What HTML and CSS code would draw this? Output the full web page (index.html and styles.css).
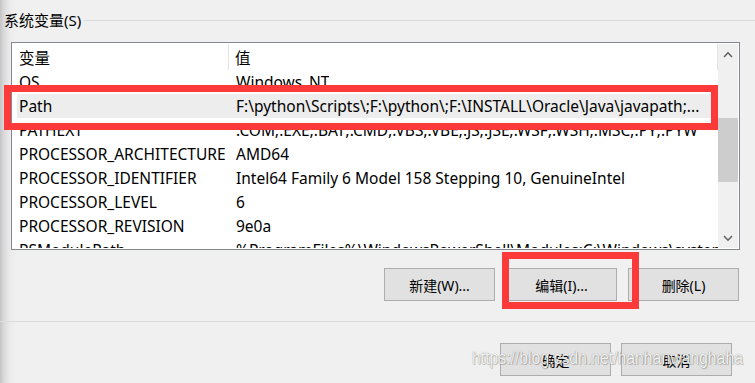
FILE: index.html
```html
<!DOCTYPE html>
<html lang="zh-CN">
<head>
  <meta charset="UTF-8">
  <meta name="viewport" content="width=device-width, initial-scale=1.0">
  <title>环境变量</title>
  <link rel="stylesheet" href="styles.css">
</head>
<body>
  <div class="dialog">
    <!-- 系统变量 -->
    <div class="group">
      <div class="group-title">
        <span>系统变量(S)</span>
        <i class="group-line"></i>
      </div>

      <div class="list">
        <div class="list-main">
          <div class="list-head">
            <div class="col-name">变量</div>
            <div class="col-value">值</div>
          </div>
          <div class="list-body">
            <div class="row first">
              <div class="cell-name">OS</div>
              <div class="cell-value">Windows_NT</div>
            </div>
            <div class="row selected">
              <div class="cell-name">Path</div>
              <div class="cell-value">F:\python\Scripts\;F:\python\;F:\INSTALL\Oracle\Java\javapath;...</div>
            </div>
            <div class="row">
              <div class="cell-name">PATHEXT</div>
              <div class="cell-value">.COM;.EXE;.BAT;.CMD;.VBS;.VBE;.JS;.JSE;.WSF;.WSH;.MSC;.PY;.PYW</div>
            </div>
            <div class="row">
              <div class="cell-name">PROCESSOR_ARCHITECTURE</div>
              <div class="cell-value">AMD64</div>
            </div>
            <div class="row">
              <div class="cell-name">PROCESSOR_IDENTIFIER</div>
              <div class="cell-value">Intel64 Family 6 Model 158 Stepping 10, GenuineIntel</div>
            </div>
            <div class="row">
              <div class="cell-name">PROCESSOR_LEVEL</div>
              <div class="cell-value">6</div>
            </div>
            <div class="row">
              <div class="cell-name">PROCESSOR_REVISION</div>
              <div class="cell-value">9e0a</div>
            </div>
            <div class="row">
              <div class="cell-name">PSModulePath</div>
              <div class="cell-value">%ProgramFiles%\WindowsPowerShell\Modules;C:\Windows\system32\...</div>
            </div>
          </div>
        </div>

        <!-- 滚动条 -->
        <div class="scrollbar">
          <div class="scroll-btn">
            <svg width="10" height="7" viewBox="0 0 10 7"><path d="M1 6 L5 1.8 L9 6" fill="none" stroke="#606060" stroke-width="1.5"/></svg>
          </div>
          <div class="scroll-track">
            <div class="scroll-thumb"></div>
          </div>
          <div class="scroll-btn">
            <svg width="10" height="7" viewBox="0 0 10 7"><path d="M1 1 L5 5.2 L9 1" fill="none" stroke="#606060" stroke-width="1.5"/></svg>
          </div>
        </div>
      </div>

      <div class="actions">
        <button class="btn">新建(W)...</button>
        <button class="btn">编辑(I)...</button>
        <button class="btn">删除(L)</button>
      </div>
    </div>

    <div class="separator"></div>

    <div class="footer">
      <button class="btn">确定</button>
      <button class="btn">取消</button>
    </div>

    <!-- 标注 -->
    <div class="mark mark-path"></div>
    <div class="mark mark-edit"></div>
    <div class="watermark">https://blog.csdn.net/hanhanwanghaha</div>
  </div>
</body>
</html>
```

FILE: styles.css
```css
* {
  margin: 0;
  padding: 0;
  box-sizing: border-box;
}

body {
  font-family: "Noto Sans", "Noto Sans CJK SC", sans-serif;
  font-size: 15.5px;
  color: #000;
  background: #f0f0f0;
  overflow: hidden;
}

.dialog {
  position: relative;
  width: 755px;
  height: 383px;
  padding-top: 10px;
  background: linear-gradient(90deg, #c4c4c4 0, #dadada 4px, #ebebeb 10px, #f0f0f0 16px);
}

/* 系统变量 */
.group-title {
  display: flex;
  align-items: center;
  height: 20px;
  padding-left: 4px;
  font-size: 15px;
  line-height: 20px;
}

.group-line {
  flex: 1;
  height: 1px;
  margin-left: 3px;
  background: #dcdcdc;
}

.list {
  display: flex;
  width: 729px;
  height: 208px;
  margin: 12px 0 0 11px;
  padding: 1px;
  background: #fff;
  border: 1px solid #828790;
}

.list-main {
  flex: 1;
  display: flex;
  flex-direction: column;
  overflow: hidden;
}

.list-head {
  display: flex;
  height: 29px;
  line-height: 28px;
  flex-shrink: 0;
  background: #fff;
  position: relative;
  z-index: 1;
}

.col-name {
  width: 216px;
  padding-left: 6px;
  border-right: 1px solid #e5e5e5;
  height: 26px;
}

.col-value {
  flex: 1;
  padding-left: 6px;
  border-right: 1px solid #e5e5e5;
  height: 26px;
}

.list-body {
  flex: 1;
  overflow: hidden;
}

.row {
  display: flex;
  height: 24px;
  line-height: 24px;
  margin-left: 4px;
  white-space: nowrap;
}

.row.first {
  margin-top: -3px;
}

.row.selected {
  background: #ededed;
}

.cell-name {
  width: 212px;
  padding-left: 2px;
  flex-shrink: 0;
}

.cell-value {
  padding-left: 7px;
  overflow: hidden;
}

/* 滚动条 */
.scrollbar {
  width: 20px;
  display: flex;
  flex-direction: column;
  background: #f0f0f0;
}

.scroll-btn {
  height: 20px;
  display: flex;
  align-items: center;
  justify-content: center;
}

.scroll-track {
  flex: 1;
}

.scroll-thumb {
  height: 64px;
  margin-top: 54px;
  background: #cdcdcd;
}

/* 按钮 */
.actions {
  display: flex;
  justify-content: flex-end;
  gap: 11px;
  margin-top: 18px;
  padding-right: 16px;
}

.btn {
  width: 111px;
  height: 33px;
  font-family: "Noto Sans", "Noto Sans CJK SC", sans-serif;
  font-size: 14px;
  color: #000;
  background: #e1e1e1;
  border: 1px solid #adadad;
}

.separator {
  height: 1px;
  margin-top: 20px;
  background: #dcdcdc;
}

.footer {
  display: flex;
  justify-content: flex-end;
  gap: 10px;
  margin-top: 21px;
  padding-right: 23px;
}

/* 标注 */
.mark {
  position: absolute;
  border: 7px solid #fc3a3a;
}

.mark-path {
  left: 4px;
  top: 85px;
  width: 714px;
  height: 45px;
}

.mark-edit {
  left: 502px;
  top: 252px;
  width: 137px;
  height: 57px;
}

.watermark {
  position: absolute;
  left: 472px;
  top: 347px;
  font-family: "Liberation Sans", sans-serif;
  font-size: 19px;
  white-space: nowrap;
  transform: scaleX(0.83);
  transform-origin: left center;
  color: rgba(255, 255, 255, 0.92);
  text-shadow: 0 0 1px rgba(0, 0, 0, 0.45), 1px 1px 1px rgba(0, 0, 0, 0.2);
}
```
